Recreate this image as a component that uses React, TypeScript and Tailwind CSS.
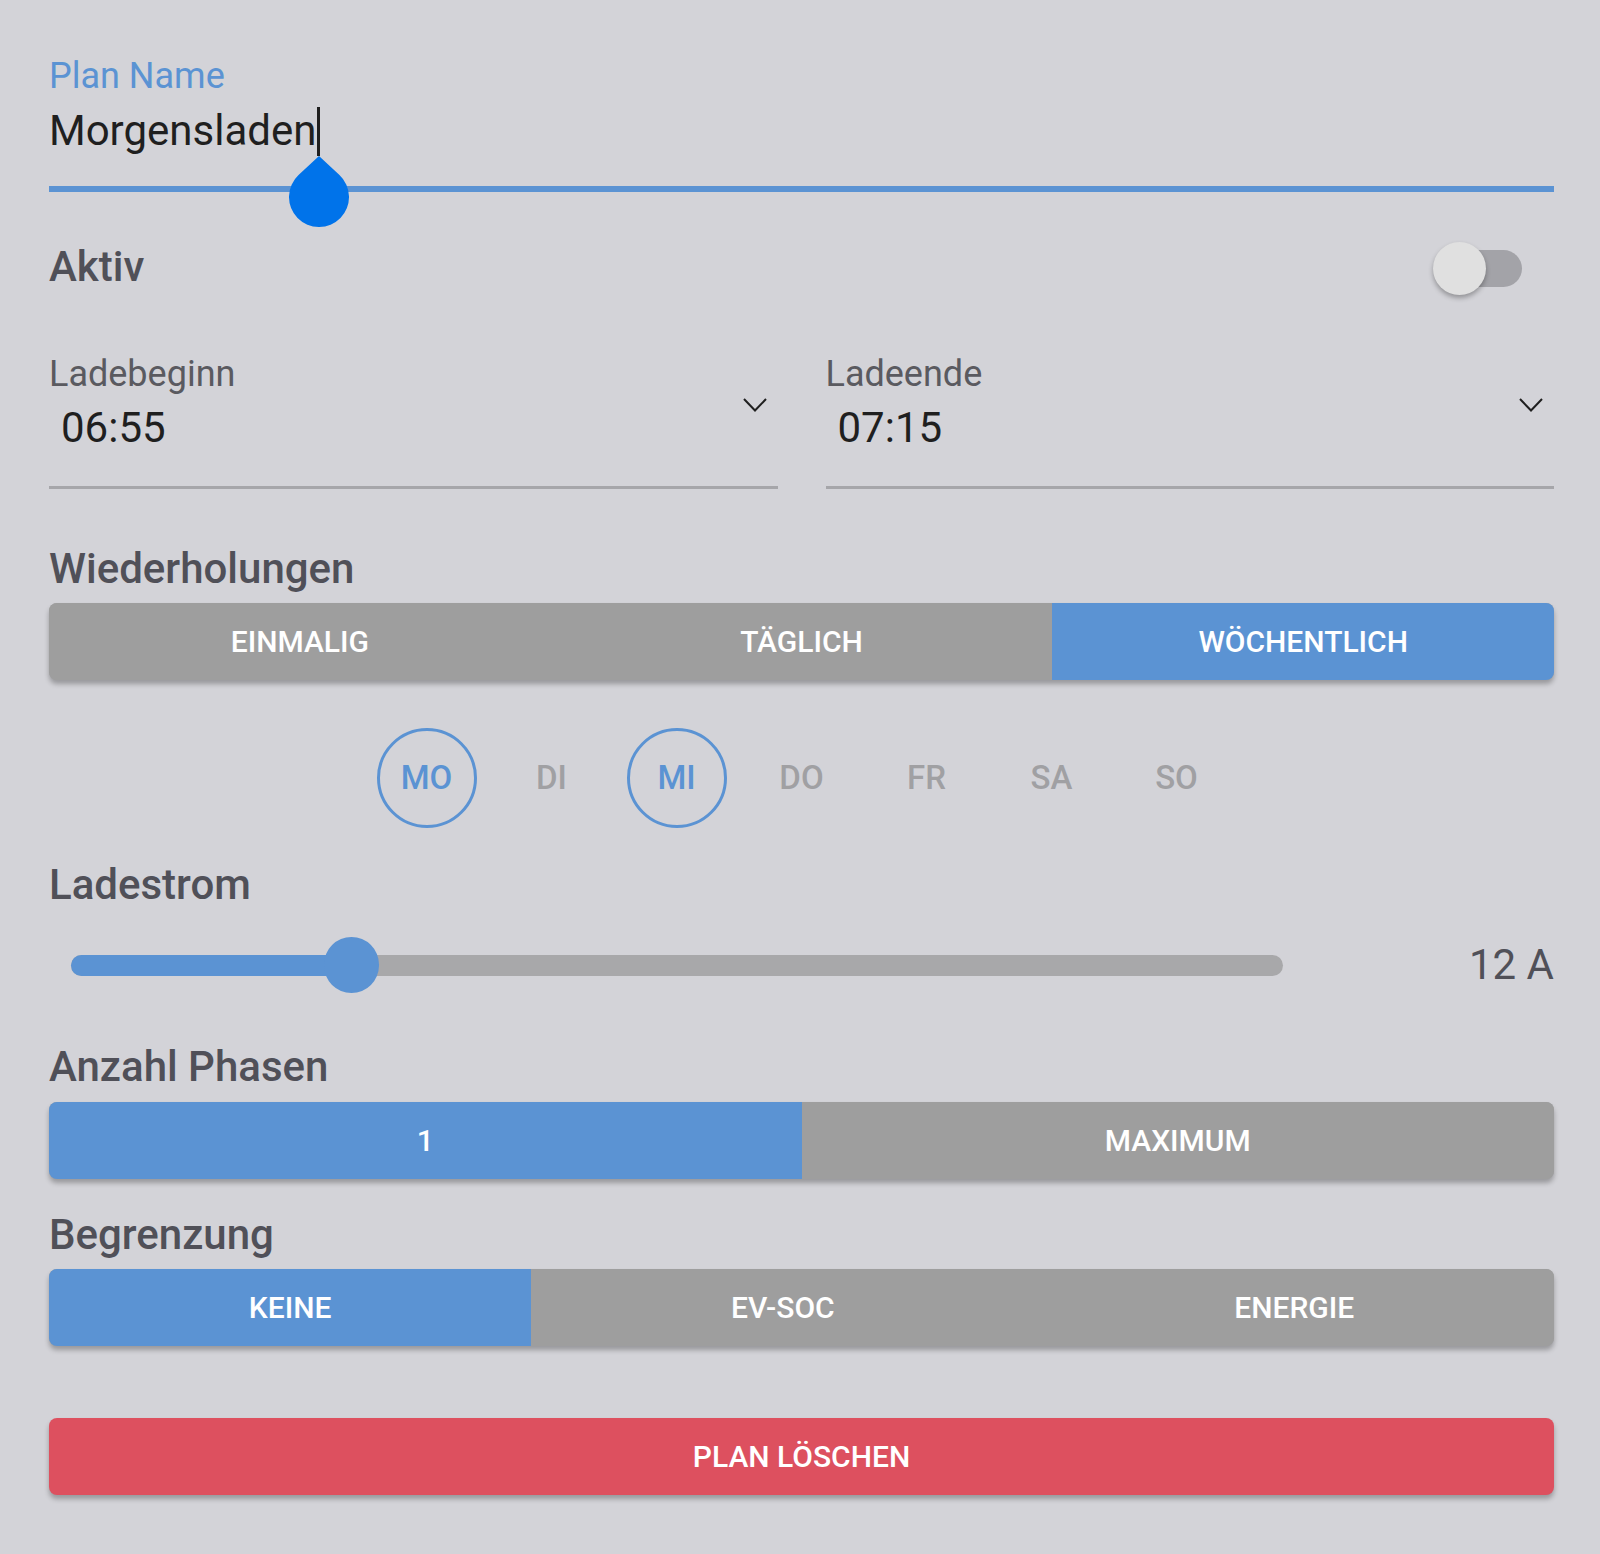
import React, { useState } from 'react';

const days = ['MO', 'DI', 'MI', 'DO', 'FR', 'SA', 'SO'];

interface SegmentProps {
  options: string[];
  selected: number;
  auto?: boolean;
}

const Segment: React.FC<SegmentProps> = ({ options, selected, auto }) => (
  <div className="flex h-[77px] rounded-[8px] overflow-hidden bg-[#9e9e9e] shadow-[0_4px_5px_rgba(0,0,0,0.28)]">
    {options.map((opt, i) => (
      <div
        key={opt}
        className={`${auto ? 'flex-auto' : 'flex-1 basis-0'} flex items-center justify-center text-[30px] font-medium text-white ${i === selected ? 'bg-[#5b93d3]' : 'bg-[#9e9e9e]'}`}
      >
        {opt}
      </div>
    ))}
  </div>
);

const Heading: React.FC<{ children: React.ReactNode; className?: string }> = ({ children, className }) => (
  <h2 className={`text-[42px] leading-none font-medium text-[#505058] ${className ?? ''}`}>{children}</h2>
);

const TimeSelect: React.FC<{ label: string; value: string }> = ({ label, value }) => (
  <div className="flex-1">
    <div className="text-[36px] leading-none text-[#5a5a60]">{label}</div>
    <div className="relative mt-[15px] h-[42px]">
      <span className="block text-[42px] leading-none text-[#1f1f1f] pl-[12px]">{value}</span>
      <svg width="24" height="14" viewBox="0 0 24 14" className="absolute right-[11px] top-[-9px]">
        <path d="M1 1 L12 12.5 L23 1" fill="none" stroke="#1f1f1f" strokeWidth="2" />
      </svg>
    </div>
    <div className="mt-[37px] h-[3px] bg-[#a6a6aa]" />
  </div>
);

export default function App() {
  const [active, setActive] = useState(false);
  const selectedDays = ['MO', 'MI'];

  return (
    <div className="min-h-screen bg-[#d3d3d8] font-['Roboto',sans-serif] pl-[49px] pr-[46px] pt-[58px] pb-[59px]">
      {/* Plan name input */}
      <div className="relative">
        <div className="text-[36px] leading-none text-[#5b93d3]">Plan Name</div>
        <div className="flex items-start h-[42px] mt-[16px]">
          <span className="text-[42px] leading-none text-[#1f1f1f]">Morgensladen</span>
          <span className="relative w-[3px] ml-[1px]">
            <span className="absolute left-0 top-[-3px] w-[3px] h-[49px] bg-[#1f1f1f]" />
            <svg
              width="60"
              height="71"
              viewBox="0 0 60 71"
              className="absolute left-[-28.5px] top-[46px] z-10"
            >
              <path d="M30 0 L50.46 19.06 A30 30 0 1 1 9.54 19.06 Z" fill="#0073ea" />
            </svg>
          </span>
        </div>
        <div className="mt-[34px] h-[6px] bg-[#5b93d3]" />
      </div>

      {/* Aktiv */}
      <div className="flex items-center justify-between mt-[48px] pr-[32px]">
        <Heading>Aktiv</Heading>
        <button onClick={() => setActive(!active)} className="relative w-[89px] h-[53px]">
          <span className={`absolute right-0 top-[10px] w-[82px] h-[37px] rounded-full ${active ? 'bg-[#5b93d3]' : 'bg-[#a3a3a8]'}`} />
          <span className="absolute left-0 top-[2px] w-[53px] h-[53px] rounded-full bg-[#e0e0e0] shadow-[0_3px_5px_rgba(0,0,0,0.3)]" />
        </button>
      </div>

      {/* Times */}
      <div className="flex gap-[48px] mt-[63px]">
        <TimeSelect label="Ladebeginn" value="06:55" />
        <TimeSelect label="Ladeende" value="07:15" />
      </div>

      {/* Wiederholungen */}
      <Heading className="mt-[59px]">Wiederholungen</Heading>
      <div className="mt-[13px]">
        <Segment options={['EINMALIG', 'TÄGLICH', 'WÖCHENTLICH']} selected={2} />
      </div>

      <div className="flex justify-center gap-[25px] mt-[48px]">
        {days.map((d) => {
          const on = selectedDays.includes(d);
          return (
            <div
              key={d}
              className={`w-[100px] h-[100px] rounded-full flex items-center justify-center text-[33px] font-medium ${on ? 'border-[3px] border-[#5b93d3] text-[#5b93d3]' : 'text-[#a0a0a3]'}`}
            >
              {d}
            </div>
          );
        })}
      </div>

      {/* Ladestrom */}
      <Heading className="mt-[36px]">Ladestrom</Heading>
      <div className="flex items-center mt-[31px] h-[56px]">
        <div className="relative ml-[22px] w-[1212px] h-[21px] rounded-full bg-[#a8a8aa]">
          <div className="absolute left-0 top-0 h-[21px] w-[280px] rounded-full bg-[#5b93d3]" />
          <div className="absolute left-[253px] top-[-17.5px] w-[55px] h-[56px] rounded-full bg-[#5b93d3]" />
        </div>
        <div className="flex-1 text-right text-[42px] leading-none text-[#505058]">12 A</div>
      </div>

      {/* Anzahl Phasen */}
      <Heading className="mt-[53px]">Anzahl Phasen</Heading>
      <div className="mt-[14px]">
        <Segment options={['1', 'MAXIMUM']} selected={0} />
      </div>

      {/* Begrenzung */}
      <Heading className="mt-[35px]">Begrenzung</Heading>
      <div className="mt-[13px]">
        <Segment options={['KEINE', 'EV-SOC', 'ENERGIE']} selected={0} auto />
      </div>

      <button className="mt-[72px] w-full h-[77px] rounded-[8px] bg-[#dd505f] text-white text-[30px] font-medium shadow-[0_4px_5px_rgba(0,0,0,0.28)]">
        PLAN LÖSCHEN
      </button>
    </div>
  );
}
